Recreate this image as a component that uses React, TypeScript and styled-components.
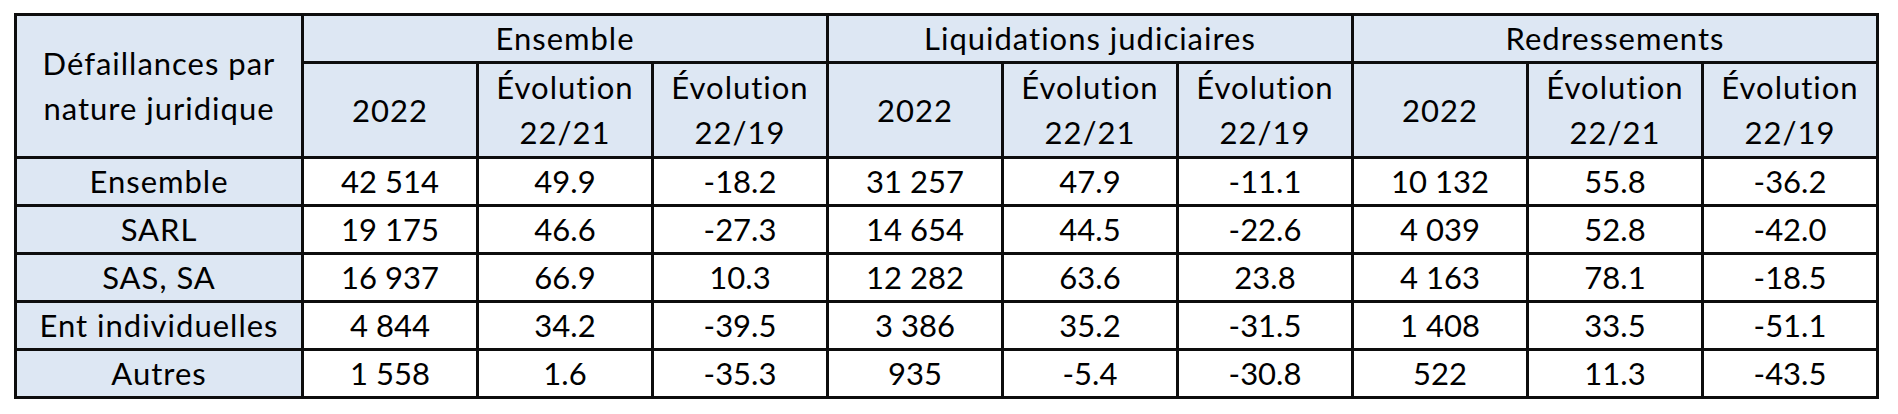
import styled, { createGlobalStyle } from "styled-components"

const GlobalStyle = createGlobalStyle`
  body {
    margin: 0;
    background: #ffffff;
  }
`

const Page = styled.div`
  padding: 13px 0 0 14px;
`

const Table = styled.table`
  border-collapse: collapse;
  table-layout: fixed;
  font-family: Lato, "Liberation Sans", sans-serif;
  font-size: 31px;
  line-height: 45px;
  color: #000;
`

const Col = styled.col<{ $w: number }>`
  width: ${(p) => p.$w}px;
`

const HeadCell = styled.th<{ $h?: number }>`
  border: 3px solid #0d0d0d;
  background: #dde7f3;
  font-weight: 400;
  letter-spacing: 1px;
  text-align: center;
  vertical-align: middle;
  padding: 0;
  height: ${(p) => p.$h ?? 42}px;
  white-space: nowrap;
`

const Cell = styled.td<{ $label?: boolean }>`
  border: 3px solid #0d0d0d;
  background: ${(p) => (p.$label ? "#dde7f3" : "#ffffff")};
  letter-spacing: ${(p) => (p.$label ? "1px" : "0")};
  text-align: center;
  vertical-align: middle;
  padding: 0;
  height: 45px;
  white-space: nowrap;
`

const groups = ["Ensemble", "Liquidations judiciaires", "Redressements"]

const rows: [string, string[]][] = [
  ["Ensemble", ["42 514", "49.9", "-18.2", "31 257", "47.9", "-11.1", "10 132", "55.8", "-36.2"]],
  ["SARL", ["19 175", "46.6", "-27.3", "14 654", "44.5", "-22.6", "4 039", "52.8", "-42.0"]],
  ["SAS, SA", ["16 937", "66.9", "10.3", "12 282", "63.6", "23.8", "4 163", "78.1", "-18.5"]],
  ["Ent individuelles", ["4 844", "34.2", "-39.5", "3 386", "35.2", "-31.5", "1 408", "33.5", "-51.1"]],
  ["Autres", ["1 558", "1.6", "-35.3", "935", "-5.4", "-30.8", "522", "11.3", "-43.5"]],
]

export default function App() {
  return (
    <Page>
      <GlobalStyle />
      <Table>
        <colgroup>
          <Col $w={287} />
          {Array.from({ length: 9 }).map((_, i) => (
            <Col key={i} $w={175} />
          ))}
        </colgroup>
        <thead>
          <tr>
            <HeadCell rowSpan={2}>
              Défaillances par
              <br />
              nature juridique
            </HeadCell>
            {groups.map((g) => (
              <HeadCell key={g} colSpan={3}>
                {g}
              </HeadCell>
            ))}
          </tr>
          <tr>
            {groups.map((g) => [
              <HeadCell key={g + "a"} $h={92}>2022</HeadCell>,
              <HeadCell key={g + "b"} $h={92}>
                Évolution
                <br />
                22/21
              </HeadCell>,
              <HeadCell key={g + "c"} $h={92}>
                Évolution
                <br />
                22/19
              </HeadCell>,
            ])}
          </tr>
        </thead>
        <tbody>
          {rows.map(([label, values]) => (
            <tr key={label}>
              <Cell $label>{label}</Cell>
              {values.map((v, i) => (
                <Cell key={i}>{v}</Cell>
              ))}
            </tr>
          ))}
        </tbody>
      </Table>
    </Page>
  )
}
